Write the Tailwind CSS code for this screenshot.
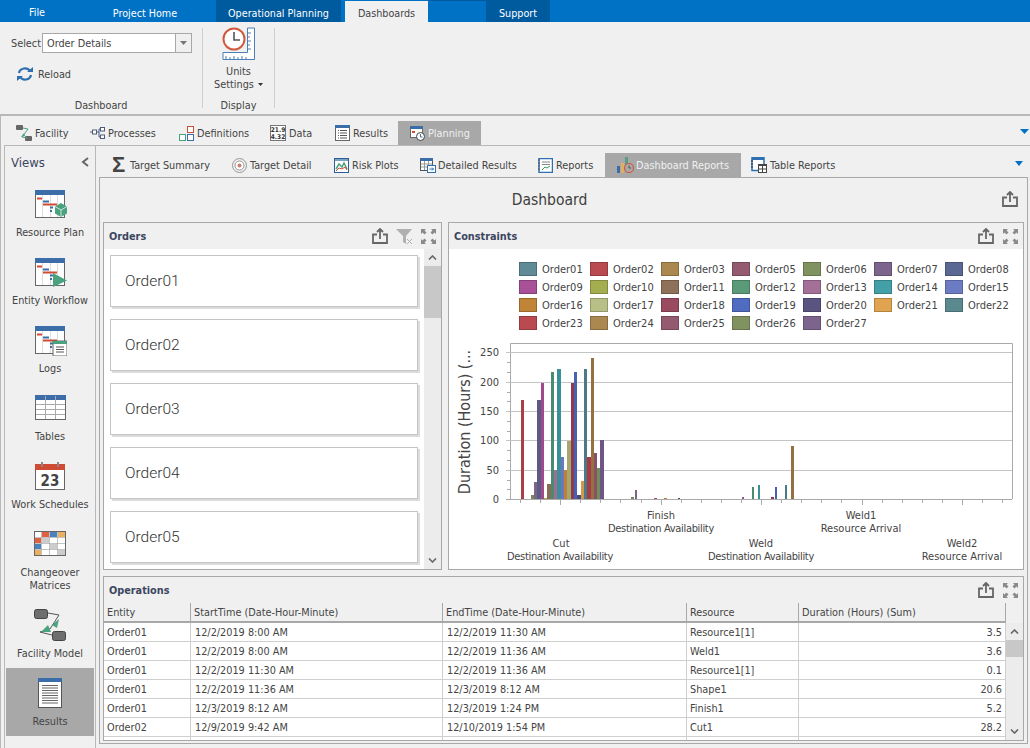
<!DOCTYPE html>
<html lang="en">
<head>
<meta charset="UTF-8">
<title>Dashboards</title>
<script src="https://cdn.jsdelivr.net/npm/@tailwindcss/browser@4"></script>
</head>
<body class="w-[1030px] h-[748px] overflow-hidden bg-[#f0f0f0] text-[10.8px] leading-[13px] text-[#444] font-['DejaVu_Sans_Condensed','Noto_Sans',sans-serif]">

<svg class="hidden">
  <symbol id="share" viewBox="0 0 16 16">
    <path d="M5 6.5H1v8.5h14V6.5h-4M8 11V1.5M5 4l3-3 3 3" fill="none" stroke="#666" stroke-width="1.8"/>
  </symbol>
  <symbol id="expand" viewBox="0 0 15 15">
    <path d="M0 0h5L3.5 1.5 5.500 3.5 3.5 5.5 1.5 3.5 0 5zM15 0v5l-1.5-1.500-2 2-2-2 2-2L10 0zM0 15v-5l1.500 1.500 2-2 2 2-2 2L5 15zM15 15h-5l1.500-1.500-2-2 2-2 2 2L15 10z" fill="#8a8a8a"/>
  </symbol>
  <symbol id="gantt" viewBox="0 0 32 30">
    <rect x="0.5" y="0.5" width="29" height="27" fill="#fff" stroke="#666"/>
    <rect x="0" y="0" width="30" height="5" fill="#3b6ea8"/>
    <path d="M7.5 5v22M15.5 5v22M22.5 5v22" stroke="#ddd"/>
    <rect x="2" y="7.500" width="5" height="2" fill="#cf4b33"/>
    <rect x="8" y="10.500" width="6" height="2" fill="#3b6ea8"/>
    <rect x="8" y="13.500" width="14" height="2" fill="#cf4b33"/>
    <rect x="15" y="16.500" width="3" height="2" fill="#3b6ea8"/>
    <rect x="15" y="20" width="2" height="2" fill="#3b6ea8"/>
  </symbol>
</svg>

<!-- Top menu -->
<nav class="flex h-[22px] bg-[#0072c6] text-white text-[10.7px]">
  <a class="w-[74px] flex items-center justify-center pt-[2px]">File</a>
  <a class="w-[142px] flex items-center justify-center pt-[4px]">Project Home</a>
  <a class="w-[125px] flex items-center justify-center pt-[4px] bg-[#005a9e]">Operational Planning</a>
  <div class="w-[4px]"></div>
  <a class="w-[83px] mt-px flex items-center justify-center pt-[3px] bg-[#f0f0f0] text-[#444]">Dashboards</a>
  <div class="w-[58px] border-t border-[#005a9e]"></div>
  <a class="w-[64px] flex items-center justify-center pt-[4px] bg-[#005a9e]">Support</a>
</nav>

<!-- Ribbon -->
<section class="flex h-[92px]">
  <div class="w-[202px] flex flex-col">
    <div class="flex items-center mt-[11px] pl-[11px]">
      <span class="w-[31px]">Select</span>
      <div class="w-[150px] h-[20px] flex border border-[#a8a8a8] bg-white">
        <span class="flex-1 pl-[4px] self-center">Order Details</span>
        <span class="w-[16px] flex items-center justify-center border-l border-[#a8a8a8] bg-[#f0f0f0]">
          <svg width="7" height="4"><path d="M0 0h7L3.5 4z" fill="#777"/></svg>
        </span>
      </div>
    </div>
    <div class="flex items-center gap-[5px] mt-[14px] pl-[17px]">
      <svg width="16" height="14" viewBox="0 0 16 14"><path d="M2 6a6 5.5 0 0 1 11-2" fill="none" stroke="#2f6fb0" stroke-width="2.2"/><path d="M10 5h6V0z" fill="#2f6fb0"/><path d="M14 8a6 5.5 0 0 1-11 2" fill="none" stroke="#2f6fb0" stroke-width="2.2"/><path d="M6 9H0v5z" fill="#2f6fb0"/></svg>
      <span>Reload</span>
    </div>
    <div class="mt-auto h-[18px] flex items-center justify-center">Dashboard</div>
  </div>
  <div class="w-px h-[80px] mt-[6px] bg-[#cfcfcf]"></div>
  <div class="w-[71px] flex flex-col items-center">
    <svg class="mt-[5px]" width="33" height="33" viewBox="0 0 33 33">
      <path d="M32.5 1v31.5H1v-7h24.5V1z" fill="#fff" stroke="#4a7fb8"/>
      <path d="M4 32v-3M8 32v-2M12 32v-3M16 32v-2M20 32v-3M24 32v-2M26 22h3M26 18h2M26 14h3M26 10h2M26 6h3" stroke="#4a7fb8"/>
      <circle cx="12" cy="12" r="10.5" fill="#fff" stroke="#cf5a3e" stroke-width="2"/>
      <path d="M12 5v8h6" fill="none" stroke="#555" stroke-width="1.6"/>
    </svg>
    <span class="mt-[5px]">Units</span>
    <span class="flex items-center gap-[4px]">Settings <svg width="5" height="3"><path d="M0 0h5L2.5 3z" fill="#333"/></svg></span>
    <div class="mt-auto h-[18px] flex items-center">Display</div>
  </div>
  <div class="w-px h-[80px] mt-[6px] bg-[#cfcfcf]"></div>
</section>

<!-- Everything under the ribbon -->
<div class="border-t-2 border-l border-[#b8b8b8] h-[634px]">
  <div class="flex items-end h-[29px] pl-[3px] relative">
    <a class="w-[74px] h-[24px] pl-[12px] flex items-center gap-[3px]">
      <svg width="16" height="16" viewBox="0 0 16 16"><rect x="0" y="0" width="7" height="5" rx="1" fill="#666"/><rect x="9" y="11" width="7" height="5" rx="1" fill="#666"/><path d="M7 3l5 1-6 8 5 1" fill="none" stroke="#4aa37f"/><path d="M5 12l3-4 1 3z" fill="#4aa37f"/></svg>
      <span>Facility</span>
    </a>
    <a class="w-[89px] h-[24px] pl-[12px] flex items-center gap-[3px]">
      <svg width="15" height="12" viewBox="0 0 15 12"><path d="M0 5h3M6 5h3M9 2h2M9 2v8h2" fill="none" stroke="#4c5c7c"/><rect x="2.5" y="3" width="4" height="4" fill="#fff" stroke="#4c5c7c"/><rect x="10.5" y="0.5" width="4" height="3.5" fill="#fff" stroke="#4c5c7c"/><rect x="10.5" y="8" width="4" height="3.5" fill="#fff" stroke="#4c5c7c"/></svg>
      <span>Processes</span>
    </a>
    <a class="w-[91px] h-[24px] pl-[12px] flex items-center gap-[3px]">
      <svg width="15" height="15" viewBox="0 0 15 15"><rect x="8.5" y="0.5" width="6" height="6" fill="#fff" stroke="#c8503a"/><rect x="0.5" y="8.5" width="6" height="6" fill="#fff" stroke="#4aa37f"/><rect x="8.5" y="8.5" width="6" height="6" fill="#fff" stroke="#3b6ea8"/></svg>
      <span>Definitions</span>
    </a>
    <a class="w-[65px] h-[24px] pl-[12px] flex items-center gap-[3px]">
      <svg width="16" height="16" viewBox="0 0 16 16"><rect x="0.5" y="0.5" width="15" height="15" fill="#fff" stroke="#777"/><text x="8" y="7" text-anchor="middle" font-size="6.5" font-weight="700" fill="#333">21.9</text><text x="8" y="14" text-anchor="middle" font-size="6.5" font-weight="700" fill="#333">4.32</text></svg>
      <span>Data</span>
    </a>
    <a class="w-[75px] h-[24px] pl-[12px] flex items-center gap-[2px]">
      <svg width="15" height="16" viewBox="0 0 15 16"><rect x="0.5" y="0.5" width="14" height="15" fill="#fff" stroke="#666"/><rect width="15" height="3" fill="#3b6ea8"/><path d="M3 5.5h1M5 5.5h7M3 8h1M5 8h7M3 10.5h1M5 10.5h7M3 13h1M5 13h7" stroke="#555"/></svg>
      <span class="ml-px">Results</span>
    </a>
    <a class="w-[83px] h-[24px] pl-[12px] flex items-center gap-[3px] bg-[#a8a8a8] text-[#f0f0f0]">
      <svg width="15" height="16" viewBox="0 0 15 16"><rect x="0.5" y="1.5" width="12" height="11" fill="#fff" stroke="#666"/><rect y="1" width="13" height="3" fill="#3b6ea8"/><rect x="2" y="6" width="3" height="2" fill="#cf4b33"/><circle cx="10.5" cy="11.5" r="4" fill="#fff" stroke="#444"/><path d="M10.5 9v3h2" fill="none" stroke="#3b6ea8"/></svg>
      <span>Planning</span>
    </a>
    <svg class="absolute left-[1019px] top-[13px]" width="9" height="5"><path d="M0 0h9L4.5 5z" fill="#0072c6"/></svg>
  </div>

  <div class="ml-[3px] border-t border-l border-[#b8b8b8] flex h-[603px]">
    <!-- Views sidebar -->
    <aside class="w-[90px] shrink-0 text-center">
      <div class="h-[26px] pt-[6px] pl-[6px] pr-[6px] flex items-center justify-between">
        <span class="text-[13px] text-[#3c4660]">Views</span>
        <svg width="8" height="10" viewBox="0 0 8 10"><path d="M7 1L2 5l5 4" fill="none" stroke="#666" stroke-width="2"/></svg>
      </div>
      <div class="h-[68px] flex flex-col items-center pt-[18px]">
        <svg class="ml-[1px]" width="32" height="30" viewBox="0 0 32 30">
          <use href="#gantt"/>
          <path d="M26 13l6 3.5v7L26 27l-6-3.5v-7z" fill="#4aa37f"/><path d="M20 16.5l6 3.5 6-3.5M26 20v7" fill="none" stroke="#c8e4d8"/>
        </svg>
        <span class="mt-[6px]">Resource Plan</span>
      </div>
      <div class="h-[68px] flex flex-col items-center pt-[18px]">
        <svg class="ml-[1px]" width="32" height="30" viewBox="0 0 32 30">
          <use href="#gantt"/>
          <path d="M18 15l14 7.5L18 29z" fill="#4aa37f"/>
        </svg>
        <span class="mt-[6px]">Entity Workflow</span>
      </div>
      <div class="h-[68px] flex flex-col items-center pt-[18px]">
        <svg class="ml-[1px]" width="32" height="30" viewBox="0 0 32 30">
          <use href="#gantt"/>
          <rect x="18" y="15" width="14" height="15" fill="#fff" stroke="#666"/><rect x="18" y="15" width="14" height="3" fill="#4aa37f"/><path d="M21 21h8M21 23.5h8M21 26h8" stroke="#555"/>
        </svg>
        <span class="mt-[6px]">Logs</span>
      </div>
      <div class="h-[68px] flex flex-col items-center pt-[19px]">
        <svg width="31" height="25" viewBox="0 0 31 25">
          <rect x="0.5" y="0.5" width="30" height="24" fill="#fff" stroke="#666"/>
          <rect width="31" height="5" fill="#3b6ea8"/>
          <path d="M1 9.5h29M1 14.5h29M1 19.5h29M10.5 1v23M20.5 1v23" stroke="#aaa"/>
        </svg>
        <span class="mt-[10px]">Tables</span>
      </div>
      <div class="h-[68px] flex flex-col items-center pt-[18px]">
        <svg width="30" height="28" viewBox="0 0 30 28">
          <rect x="0.5" y="2.5" width="29" height="25" fill="#fff" stroke="#666"/>
          <rect y="2" width="30" height="6" fill="#cf4b33"/>
          <path d="M7 0v5M23 0v5" stroke="#888" stroke-width="2"/>
          <text x="15" y="24" text-anchor="middle" font-size="15" font-weight="700" fill="#444">23</text>
        </svg>
        <span class="mt-[8px]">Work Schedules</span>
      </div>
      <div class="h-[81px] flex flex-col items-center pt-[19px]">
        <svg width="32" height="25" viewBox="0 0 32 25">
          <rect x="0.5" y="0.5" width="31" height="24" fill="#fff" stroke="#666"/>
          <rect x="1" y="1" width="6" height="5" fill="#fff"/><rect x="8" y="1" width="7" height="5" fill="#e0603f"/><rect x="16" y="1" width="7" height="5" fill="#4a82bd"/><rect x="24" y="1" width="7" height="5" fill="#e8b060"/>
          <rect x="1" y="7" width="6" height="5" fill="#e0603f"/><rect x="8" y="7" width="7" height="5" fill="#ccc"/>
          <rect x="1" y="13" width="6" height="5" fill="#4a82bd"/><rect x="16" y="13" width="7" height="5" fill="#ccc"/>
          <rect x="1" y="19" width="6" height="5" fill="#e8b060"/><rect x="24" y="19" width="7" height="5" fill="#ccc"/>
          <path d="M7.5 1v23M15.5 1v23M23.5 1v23M1 6.5h30M1 12.5h30M1 18.5h30" stroke="#888" stroke-width="0.5"/>
        </svg>
        <span class="mt-[10px] leading-[13px]">Changeover<br>Matrices</span>
      </div>
      <div class="h-[75px] flex flex-col items-center pt-[16px]">
        <svg width="32" height="32" viewBox="0 0 32 32">
          <rect x="0.5" y="0.5" width="13" height="9" rx="2" fill="#6e6e6e" stroke="#444"/>
          <rect x="18.5" y="22.5" width="13" height="9" rx="2" fill="#6e6e6e" stroke="#444"/>
          <path d="M14 4l11 2-9 14-10 3 12 3" fill="none" stroke="#555"/>
          <path d="M18 16l7-6-2 9z" fill="#4aa37f"/><path d="M7 23l7-7 3 7z" fill="#4aa37f"/>
        </svg>
        <span class="mt-[6px]">Facility Model</span>
      </div>
      <div class="h-[68px] mx-px flex flex-col items-center pt-[10px] bg-[#a8a8a8]">
        <svg width="24" height="30" viewBox="0 0 24 30">
          <rect x="0.5" y="0.5" width="23" height="29" fill="#fff" stroke="#555"/>
          <rect width="24" height="4" fill="#3b6ea8"/>
          <path d="M4 7.5h16M4 10h16M4 12.5h16M4 15h16M4 17.5h16M4 20h16M4 22.5h16M4 25h16" stroke="#666"/>
        </svg>
        <span class="mt-[7px]">Results</span>
      </div>
    </aside>

    <main class="border-l border-[#b8b8b8] flex-1 min-w-0">
      <div class="flex items-end h-[31px] relative">
        <a class="w-[124px] h-[24px] pl-[16px] flex items-center gap-[3px]">
          <span class="w-[15px] text-[22px] font-bold leading-none text-[#444] font-['Liberation_Sans',sans-serif]">Σ</span>
          <span>Target Summary</span>
        </a>
        <a class="w-[102px] h-[24px] pl-[12px] flex items-center gap-[3px]">
          <svg width="15" height="15" viewBox="0 0 15 15"><circle cx="7.5" cy="7.5" r="7" fill="#eee" stroke="#999"/><circle cx="7.5" cy="7.5" r="4.5" fill="#fff" stroke="#999"/><circle cx="7.5" cy="7.5" r="2" fill="#c9806e"/></svg>
          <span>Target Detail</span>
        </a>
        <a class="w-[86px] h-[24px] pl-[12px] flex items-center gap-[3px]">
          <svg width="15" height="15" viewBox="0 0 15 15"><rect x="0.5" y="0.5" width="14" height="14" fill="#fff" stroke="#2d5e96"/><rect x="1" y="1" width="13" height="2" fill="#7aa0c8"/><path d="M2 11l3-5 3 3 2-4 3 6" fill="none" stroke="#4aa37f" stroke-width="1.5"/><path d="M2 13l3-3 3 1 3-2 2 3" fill="none" stroke="#cf4b33"/></svg>
          <span>Risk Plots</span>
        </a>
        <a class="w-[118px] h-[24px] pl-[12px] flex items-center gap-[2px]">
          <svg width="16" height="16" viewBox="0 0 16 16"><rect x="0.5" y="1.5" width="12" height="12" fill="#fff" stroke="#555"/><rect y="1" width="13" height="3" fill="#3b6ea8"/><path d="M4.5 4v9M8.5 4v9M1 7h11M1 10h11" stroke="#999"/><rect x="7.5" y="8.5" width="8" height="7" fill="#fff" stroke="#2d6fb0"/><path d="M9.5 12h4M12 10.5l1.500 1.500-1.500 1.500" fill="none" stroke="#2d6fb0"/></svg>
          <span>Detailed Results</span>
        </a>
        <a class="w-[79px] h-[24px] pl-[12px] flex items-center gap-[3px]">
          <svg width="15" height="15" viewBox="0 0 15 15"><rect x="1" y="0.5" width="13.5" height="14" fill="#fff" stroke="#2d6fb0" stroke-width="1.5"/><path d="M0 2h2M0 5h2M0 8h2M0 11h2" stroke="#555"/><path d="M4 4h8M4 6.5h8" stroke="#888"/><path d="M4 12l3-3 2 1 3-2" fill="none" stroke="#3f9a60"/></svg>
          <span>Reports</span>
        </a>
        <a class="w-[136px] h-[24px] pl-[12px] flex items-center gap-[2px] bg-[#a8a8a8] text-[#f0f0f0]">
          <svg width="17" height="16" viewBox="0 0 17 16"><rect x="0" y="9" width="3" height="7" fill="#3b6ea8"/><rect x="4" y="6" width="3" height="10" fill="#e0b060"/><rect x="8" y="0" width="3" height="8" fill="#5b9a86"/><circle cx="12" cy="11" r="4.5" fill="#a8a8a8" stroke="#cf5a3e" stroke-width="1.2"/><path d="M12 8.5V11h2" fill="none" stroke="#555"/></svg>
          <span>Dashboard Reports</span>
        </a>
        <a class="h-[24px] pl-[10px] flex items-center gap-[3px]">
          <svg width="16" height="16" viewBox="0 0 16 16"><rect x="1" y="0.5" width="12" height="13" fill="#fff" stroke="#2d6fb0" stroke-width="1.5"/><rect x="1" y="0" width="12" height="3" fill="#2d6fb0"/><path d="M0 4h2M0 7h2M0 10h2" stroke="#333"/><rect x="7.5" y="7.5" width="8" height="8" fill="#fff" stroke="#444"/><rect x="7" y="7" width="9" height="2" fill="#444"/><path d="M11.5 8v7M8 12h7" stroke="#444"/></svg>
          <span>Table Reports</span>
        </a>
        <svg class="absolute left-[919px] top-[15px]" width="8" height="5"><path d="M0 0h8L4 5z" fill="#0072c6"/></svg>
      </div>

      <div class="ml-[3px] w-[929px] h-[567px] border border-[#a8a8a8] px-[3px]">
        <div class="h-[44px] flex items-center justify-center relative pr-[28px]">
          <h1 class="text-[15.5px] leading-[20px] text-[#3f3f3f]">Dashboard</h1>
          <svg class="absolute right-[6px] top-[13px]" width="16" height="16"><use href="#share"/></svg>
        </div>

        <div class="flex gap-[6px] h-[348px]">
          <!-- Orders -->
          <section class="w-[339px] border border-[#a8a8a8] flex flex-col">
            <header class="h-[26px] shrink-0 flex items-center pl-[5px] pr-[5px]">
              <b class="flex-1 text-[#3c4660]">Orders</b>
              <svg width="16" height="16"><use href="#share"/></svg>
              <svg class="ml-[8px]" width="17" height="15" viewBox="0 0 17 15"><path d="M0 0h16L10 7v8l-3-2V7z" fill="#b0b0b0"/><path d="M11 10l5 5M16 10l-5 5" stroke="#b0b0b0"/></svg>
              <svg class="ml-[8px]" width="15" height="15"><use href="#expand"/></svg>
            </header>
            <div class="flex-1 min-h-0 bg-white flex overflow-hidden">
              <div class="flex-1 overflow-hidden pl-[6px] pt-[6px] flex flex-col gap-[12px] text-[15.5px] font-light text-[#333] font-['Roboto',sans-serif]">
                <div class="w-[308px] h-[52px] shrink-0 border border-[#c4c4c4] shadow-[2px_2px_0_#dcdcdc] flex items-center pl-[14px]">Order01</div>
                <div class="w-[308px] h-[52px] shrink-0 border border-[#c4c4c4] shadow-[2px_2px_0_#dcdcdc] flex items-center pl-[14px]">Order02</div>
                <div class="w-[308px] h-[52px] shrink-0 border border-[#c4c4c4] shadow-[2px_2px_0_#dcdcdc] flex items-center pl-[14px]">Order03</div>
                <div class="w-[308px] h-[52px] shrink-0 border border-[#c4c4c4] shadow-[2px_2px_0_#dcdcdc] flex items-center pl-[14px]">Order04</div>
                <div class="w-[308px] h-[52px] shrink-0 border border-[#c4c4c4] shadow-[2px_2px_0_#dcdcdc] flex items-center pl-[14px]">Order05</div>
              </div>
              <div class="w-[17px] shrink-0 bg-[#ececec] flex flex-col items-center">
                <svg class="my-[6px]" width="9" height="5" viewBox="0 0 9 5"><path d="M1 4.5L4.5 1 8 4.5" fill="none" stroke="#666" stroke-width="1.6"/></svg>
                <div class="w-full h-[52px] bg-[#c8c8c8]"></div>
                <svg class="mt-auto mb-[6px]" width="9" height="5" viewBox="0 0 9 5"><path d="M1 .5L4.5 4 8 .5" fill="none" stroke="#666" stroke-width="1.6"/></svg>
              </div>
            </div>
          </section>

          <!-- Constraints -->
          <section class="w-[576px] border border-[#a8a8a8] flex flex-col">
            <header class="h-[26px] shrink-0 flex items-center pl-[5px] pr-[5px]">
              <b class="flex-1 text-[#3c4660]">Constraints</b>
              <svg width="16" height="16"><use href="#share"/></svg>
              <svg class="ml-[9px]" width="15" height="15"><use href="#expand"/></svg>
            </header>
            <div class="flex-1 min-h-0 bg-white overflow-hidden">
              <div class="ml-[70px] mt-[13px] grid grid-cols-[repeat(7,71px)] auto-rows-[18px] text-[11px] leading-[15px] text-[#444]">
                <div class="flex gap-[5px]"><i class="w-[18px] h-[14px] border border-black/20 bg-[#5f8a96]"></i>Order01</div>
                <div class="flex gap-[5px]"><i class="w-[18px] h-[14px] border border-black/20 bg-[#b84a50]"></i>Order02</div>
                <div class="flex gap-[5px]"><i class="w-[18px] h-[14px] border border-black/20 bg-[#ab8850]"></i>Order03</div>
                <div class="flex gap-[5px]"><i class="w-[18px] h-[14px] border border-black/20 bg-[#945a70]"></i>Order05</div>
                <div class="flex gap-[5px]"><i class="w-[18px] h-[14px] border border-black/20 bg-[#80925f]"></i>Order06</div>
                <div class="flex gap-[5px]"><i class="w-[18px] h-[14px] border border-black/20 bg-[#7c648c]"></i>Order07</div>
                <div class="flex gap-[5px]"><i class="w-[18px] h-[14px] border border-black/20 bg-[#5b6894]"></i>Order08</div>
                <div class="flex gap-[5px]"><i class="w-[18px] h-[14px] border border-black/20 bg-[#a85098]"></i>Order09</div>
                <div class="flex gap-[5px]"><i class="w-[18px] h-[14px] border border-black/20 bg-[#a4ae50]"></i>Order10</div>
                <div class="flex gap-[5px]"><i class="w-[18px] h-[14px] border border-black/20 bg-[#8f7058]"></i>Order11</div>
                <div class="flex gap-[5px]"><i class="w-[18px] h-[14px] border border-black/20 bg-[#5a9a78]"></i>Order12</div>
                <div class="flex gap-[5px]"><i class="w-[18px] h-[14px] border border-black/20 bg-[#a47098]"></i>Order13</div>
                <div class="flex gap-[5px]"><i class="w-[18px] h-[14px] border border-black/20 bg-[#44a0a8]"></i>Order14</div>
                <div class="flex gap-[5px]"><i class="w-[18px] h-[14px] border border-black/20 bg-[#6c7cc4]"></i>Order15</div>
                <div class="flex gap-[5px]"><i class="w-[18px] h-[14px] border border-black/20 bg-[#c08438]"></i>Order16</div>
                <div class="flex gap-[5px]"><i class="w-[18px] h-[14px] border border-black/20 bg-[#b8c088]"></i>Order17</div>
                <div class="flex gap-[5px]"><i class="w-[18px] h-[14px] border border-black/20 bg-[#9a4a60]"></i>Order18</div>
                <div class="flex gap-[5px]"><i class="w-[18px] h-[14px] border border-black/20 bg-[#506cc0]"></i>Order19</div>
                <div class="flex gap-[5px]"><i class="w-[18px] h-[14px] border border-black/20 bg-[#5a5480]"></i>Order20</div>
                <div class="flex gap-[5px]"><i class="w-[18px] h-[14px] border border-black/20 bg-[#e0a450]"></i>Order21</div>
                <div class="flex gap-[5px]"><i class="w-[18px] h-[14px] border border-black/20 bg-[#5a8a90]"></i>Order22</div>
                <div class="flex gap-[5px]"><i class="w-[18px] h-[14px] border border-black/20 bg-[#b84a50]"></i>Order23</div>
                <div class="flex gap-[5px]"><i class="w-[18px] h-[14px] border border-black/20 bg-[#ab8850]"></i>Order24</div>
                <div class="flex gap-[5px]"><i class="w-[18px] h-[14px] border border-black/20 bg-[#945a70]"></i>Order25</div>
                <div class="flex gap-[5px]"><i class="w-[18px] h-[14px] border border-black/20 bg-[#80925f]"></i>Order26</div>
                <div class="flex gap-[5px]"><i class="w-[18px] h-[14px] border border-black/20 bg-[#7c648c]"></i>Order27</div>
              </div>

              <!-- viewBox uses page coordinates, easier to measure against -->
              <svg class="block" width="574" height="235" viewBox="449 334 574 235" font-size="11" fill="#444">
                <path d="M510.5 499V343.5H1012.5V499" fill="none" stroke="#aaa"/>
                <path d="M506 352.5H1012M506 382.5H1012M506 411.5H1012M506 440.5H1012M506 470.5H1012" stroke="#c4c4c4"/>
                <path d="M506 499.5H1012" stroke="#aaa"/>
                <path d="M507 362.5h3M507 372.5h3M507 392.5h3M507 401.5h3M507 421.5h3M507 431.5h3M507 450.5h3M507 460.5h3M507 480.5h3M507 489.5h3" stroke="#aaa"/>
                <path d="M520.5 499v4M540.5 499v4M560.5 499v6M580.5 499v4M600.5 499v4M620.5 499v4M641.5 499v4M661.5 499v6M681.5 499v4M701.5 499v4M721.5 499v4M741.5 499v4M761.5 499v6M781.5 499v4M801.5 499v4M821.5 499v4M841.5 499v4M862.5 499v6M882.5 499v4M902.5 499v4M922.5 499v4M942.5 499v4M962.5 499v6M982.5 499v4M1002.5 499v4" stroke="#aaa"/>

                <rect x="521" y="400" width="3" height="99" fill="#a84048"/>
                <rect x="531" y="495" width="3" height="4" fill="#76855a"/>
                <rect x="534" y="482" width="3" height="17" fill="#7a6488"/>
                <rect x="537" y="400" width="4" height="99" fill="#5a5a85"/>
                <rect x="541" y="383" width="3" height="116" fill="#a04a8c"/>
                <rect x="544" y="498" width="3" height="1" fill="#a4ae50"/>
                <rect x="547" y="484" width="4" height="15" fill="#8a6a55"/>
                <rect x="551" y="372" width="3" height="127" fill="#4a8a70"/>
                <rect x="554" y="470" width="3" height="29" fill="#a06f95"/>
                <rect x="557" y="369" width="4" height="130" fill="#3a8f98"/>
                <rect x="561" y="457" width="3" height="42" fill="#6b78c0"/>
                <rect x="564" y="470" width="3" height="29" fill="#c08035"/>
                <rect x="567" y="441" width="4" height="58" fill="#a3a870"/>
                <rect x="571" y="383" width="3" height="116" fill="#8f3a50"/>
                <rect x="574" y="372" width="3" height="127" fill="#4a60b0"/>
                <rect x="577" y="495" width="4" height="4" fill="#4a4a78"/>
                <rect x="581" y="481" width="3" height="18" fill="#d09a48"/>
                <rect x="584" y="369" width="3" height="130" fill="#4a7a85"/>
                <rect x="587" y="457" width="4" height="42" fill="#a83a48"/>
                <rect x="591" y="358" width="3" height="141" fill="#957040"/>
                <rect x="594" y="453" width="3" height="46" fill="#8a5068"/>
                <rect x="597" y="468" width="3" height="31" fill="#6f8f5a"/>
                <rect x="600" y="440" width="4" height="59" fill="#6f5585"/>

                <rect x="631" y="497" width="3" height="2" fill="#76855a"/>
                <rect x="635" y="490" width="2" height="9" fill="#7a6488"/>
                <rect x="654" y="498" width="3" height="1" fill="#a04a8c"/>
                <rect x="664" y="498" width="3" height="1" fill="#c08035"/>
                <rect x="678" y="498" width="2" height="1" fill="#4a4a78"/>

                <rect x="742" y="497" width="2" height="2" fill="#a04a8c"/>
                <rect x="752" y="487" width="2" height="12" fill="#4a8a70"/>
                <rect x="758" y="485" width="2" height="14" fill="#3a8f98"/>
                <rect x="771" y="497" width="3" height="2" fill="#8f3a50"/>
                <rect x="775" y="487" width="2" height="12" fill="#4a60b0"/>
                <rect x="785" y="485" width="2" height="14" fill="#4a7a85"/>
                <rect x="791" y="446" width="3" height="53" fill="#957040"/>

                <g text-anchor="end">
                  <text x="499" y="356">250</text>
                  <text x="499" y="386">200</text>
                  <text x="499" y="415">150</text>
                  <text x="499" y="444">100</text>
                  <text x="499" y="474">50</text>
                  <text x="499" y="503">0</text>
                </g>
                <text transform="rotate(-90 470 422)" x="470" y="422" text-anchor="middle" font-size="16">Duration (Hours) (...</text>
                <g text-anchor="middle">
                  <text x="661" y="519">Finish</text><text x="661" y="532" letter-spacing="-0.33">Destination Availability</text>
                  <text x="561" y="547">Cut</text><text x="560" y="560" letter-spacing="-0.33">Destination Availability</text>
                  <text x="761" y="547">Weld</text><text x="761" y="560" letter-spacing="-0.33">Destination Availability</text>
                  <text x="861" y="519">Weld1</text><text x="861" y="532">Resource Arrival</text>
                  <text x="962" y="547">Weld2</text><text x="962" y="560">Resource Arrival</text>
                </g>
              </svg>
            </div>
          </section>
        </div>

        <!-- Operations -->
        <section class="mt-[6px] h-[165px] border border-[#a8a8a8] flex flex-col">
          <header class="h-[26px] shrink-0 flex items-center pl-[5px] pr-[5px]">
            <b class="flex-1 text-[#3c4660]">Operations</b>
            <svg width="16" height="16"><use href="#share"/></svg>
            <svg class="ml-[9px]" width="15" height="15"><use href="#expand"/></svg>
          </header>
          <div class="flex-1 min-h-0 flex overflow-hidden">
            <table class="w-[902px] h-fit table-fixed border-separate border-spacing-0 shrink-0 text-left">
              <colgroup><col class="w-[87px]"><col class="w-[252px]"><col class="w-[244px]"><col class="w-[112px]"><col class="w-[207px]"></colgroup>
              <thead class="font-normal">
                <tr class="h-[20px]">
                  <th class="font-normal px-[3px] border-r border-b-2 border-[#a8a8a8]">Entity</th>
                  <th class="font-normal px-[3px] border-r border-b-2 border-[#a8a8a8]">StartTime (Date-Hour-Minute)</th>
                  <th class="font-normal px-[3px] border-r border-b-2 border-[#a8a8a8]">EndTime (Date-Hour-Minute)</th>
                  <th class="font-normal px-[3px] border-r border-b-2 border-[#a8a8a8]">Resource</th>
                  <th class="font-normal px-[3px] border-r border-b-2 border-[#a8a8a8]">Duration (Hours) (Sum)</th>
                </tr>
              </thead>
              <tbody class="bg-white [&_td]:border-b [&_td]:border-r [&_td]:border-[#cfcfcf] [&_tr]:h-[19px]">
                <tr><td class="px-[3px]">Order01</td><td class="pl-[4px]">12/2/2019 8:00 AM</td><td class="pl-[4px]">12/2/2019 11:30 AM</td><td class="px-[3px]">Resource1[1]</td><td class="px-[3px] text-right">3.5</td></tr>
                <tr><td class="px-[3px]">Order01</td><td class="pl-[4px]">12/2/2019 8:00 AM</td><td class="pl-[4px]">12/2/2019 11:36 AM</td><td class="px-[3px]">Weld1</td><td class="px-[3px] text-right">3.6</td></tr>
                <tr><td class="px-[3px]">Order01</td><td class="pl-[4px]">12/2/2019 11:30 AM</td><td class="pl-[4px]">12/2/2019 11:36 AM</td><td class="px-[3px]">Resource1[1]</td><td class="px-[3px] text-right">0.1</td></tr>
                <tr><td class="px-[3px]">Order01</td><td class="pl-[4px]">12/2/2019 11:36 AM</td><td class="pl-[4px]">12/3/2019 8:12 AM</td><td class="px-[3px]">Shape1</td><td class="px-[3px] text-right">20.6</td></tr>
                <tr><td class="px-[3px]">Order01</td><td class="pl-[4px]">12/3/2019 8:12 AM</td><td class="pl-[4px]">12/3/2019 1:24 PM</td><td class="px-[3px]">Finish1</td><td class="px-[3px] text-right">5.2</td></tr>
                <tr><td class="px-[3px]">Order02</td><td class="pl-[4px]">12/9/2019 9:42 AM</td><td class="pl-[4px]">12/10/2019 1:54 PM</td><td class="px-[3px]">Cut1</td><td class="px-[3px] text-right">28.2</td></tr>
                <tr><td></td><td></td><td></td><td></td><td></td></tr>
              </tbody>
            </table>
            <div class="flex-1 flex flex-col items-center">
              <div class="w-full h-[20px] shrink-0"></div>
              <div class="w-full flex-1 bg-[#ececec] flex flex-col items-center">
                <svg class="my-[6px]" width="9" height="5" viewBox="0 0 9 5"><path d="M1 4.5L4.5 1 8 4.5" fill="none" stroke="#666" stroke-width="1.6"/></svg>
                <div class="w-full h-[17px] bg-[#c8c8c8]"></div>
                <svg class="mt-auto mb-[6px]" width="9" height="5" viewBox="0 0 9 5"><path d="M1 .5L4.5 4 8 .5" fill="none" stroke="#666" stroke-width="1.6"/></svg>
              </div>
            </div>
          </div>
        </section>
      </div>
    </main>
  </div>
</div>
</body>
</html>
